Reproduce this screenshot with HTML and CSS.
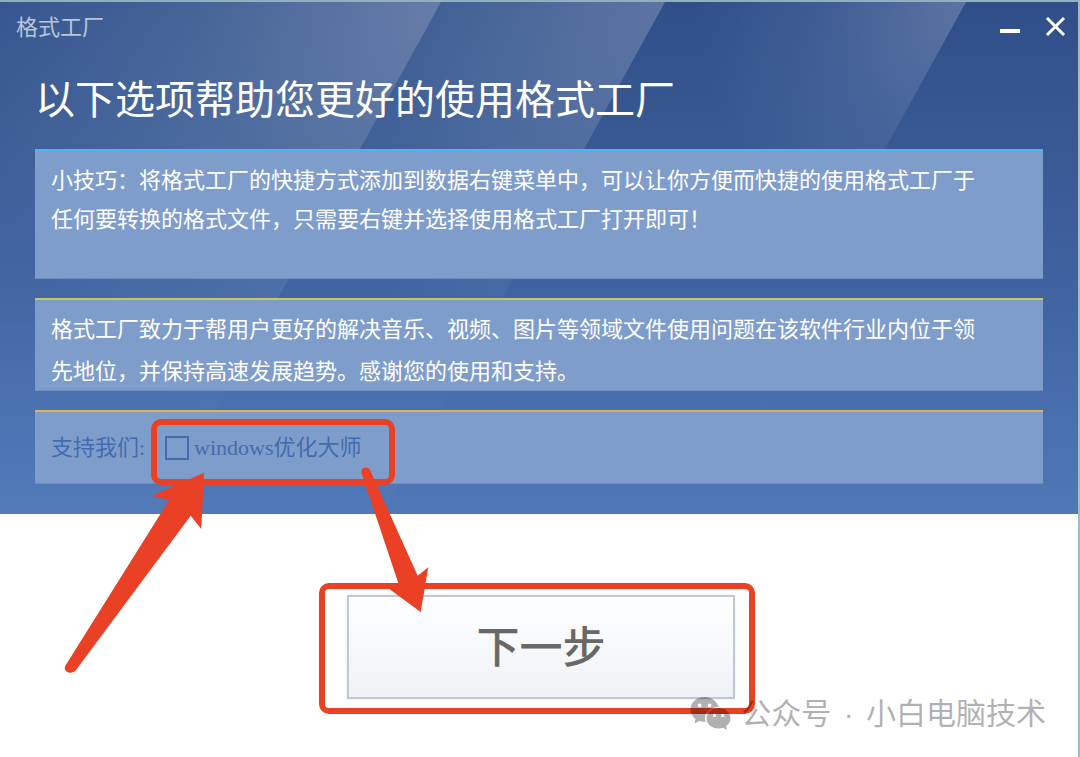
FILE: index.html
```html
<!DOCTYPE html>
<html lang="zh-CN">
<head>
    <meta charset="UTF-8">
    <meta name="viewport" content="width=device-width, initial-scale=1.0">
    <title>格式工厂</title>
    <link rel="stylesheet" href="styles.css">
</head>
<body>
    <div class="window">
        <div class="hero">
            <svg class="hero-bg" viewBox="0 0 1078 513" preserveAspectRatio="none" aria-hidden="true">
                <defs>
                    <radialGradient id="beam1" gradientUnits="userSpaceOnUse" cx="441" cy="0" r="480">
                        <stop offset="0" stop-color="#e4e4ec" stop-opacity="0.31"/>
                        <stop offset="0.5" stop-color="#c8dce4" stop-opacity="0.15"/>
                        <stop offset="1" stop-color="#a0c4e4" stop-opacity="0.04"/>
                    </radialGradient>
                    <radialGradient id="beam2" gradientUnits="userSpaceOnUse" cx="665" cy="0" r="400">
                        <stop offset="0" stop-color="#e4e4ec" stop-opacity="0.25"/>
                        <stop offset="0.5" stop-color="#c8dce4" stop-opacity="0.14"/>
                        <stop offset="1" stop-color="#a0c4e4" stop-opacity="0.02"/>
                    </radialGradient>
                    <radialGradient id="beam3" gradientUnits="userSpaceOnUse" cx="966" cy="0" r="270">
                        <stop offset="0" stop-color="#e4e4ec" stop-opacity="0.25"/>
                        <stop offset="0.5" stop-color="#d8dcf4" stop-opacity="0.1"/>
                        <stop offset="1" stop-color="#c0d0e0" stop-opacity="0"/>
                    </radialGradient>
                </defs>
                <polygon points="0,0 441,0 159,513 0,513" fill="url(#beam1)"/>
                <polygon points="441,0 665,0 383,513 159,513" fill="url(#beam2)"/>
                <polygon points="665,0 966,0 684,513 383,513" fill="url(#beam3)"/>
            </svg>

            <header class="titlebar">
                <span class="app-name">格式工厂</span>
                <div class="window-buttons">
                    <button type="button" class="window-button" aria-label="最小化">
                        <svg width="22" height="22" viewBox="0 0 22 22"><rect x="2" y="14" width="20" height="4" fill="#fff"/></svg>
                    </button>
                    <button type="button" class="window-button" aria-label="关闭">
                        <svg width="22" height="22" viewBox="0 0 22 22" fill="none" stroke="#fff" stroke-width="3"><path d="M3 3l17 17M20 3L3 20"/></svg>
                    </button>
                </div>
            </header>

            <h1>以下选项帮助您更好的使用格式工厂</h1>

            <div class="panels">
                <section class="panel tip">
                    <p>小技巧：将格式工厂的快捷方式添加到数据右键菜单中，可以让你方便而快捷的使用格式工厂于任何要转换的格式文件，只需要右键并选择使用格式工厂打开即可！</p>
                </section>
                <section class="panel about">
                    <p>格式工厂致力于帮用户更好的解决音乐、视频、图片等领域文件使用问题在该软件行业内位于领先地位，并保持高速发展趋势。感谢您的使用和支持。</p>
                </section>
                <section class="panel support">
                    <span class="support-title">支持我们:</span>
                    <input type="checkbox" id="optimizer">
                    <label for="optimizer">windows优化大师</label>
                </section>
            </div>
        </div>

        <div class="actions">
            <button type="button" class="next-button">下一步</button>
        </div>
    </div>

    <!-- Step markers -->
    <svg class="markers" width="1080" height="757" viewBox="0 0 1080 757" aria-hidden="true">
        <g fill="none" stroke="#ea4025" stroke-width="6">
            <rect x="154" y="422" width="238" height="60" rx="7"/>
            <rect x="322" y="586" width="430" height="125" rx="7"/>
        </g>
        <g fill="#ea4025">
            <path d="M204 472.700L152 495.700L169 500.300L65.500 665.500C62 671 71 676 76 670L190.700 515.700L201.300 529Z"/>
            <path d="M361.500 473C360 467 368 466 370 470L417.700 575.700L428.300 567.300L420.700 612L389.300 589L398.300 583Z"/>
        </g>
    </svg>

    <div class="watermark">
        <svg width="42" height="36" viewBox="0 0 42 36" aria-hidden="true">
            <path fill-rule="evenodd" d="M14.500 1C6.500 1 0.500 6.500 0.500 13.500C0.500 17.500 2.500 20.800 5.500 23L4.500 27.500L9.500 25Q12 26 15.500 26C13 17 20 11 28.500 11C27 5 21 1 14.500 1ZM9.700 7.500a1.900 1.900 0 1 1 0 3.800a1.900 1.900 0 1 1 0-3.800M19.500 7.500a1.900 1.900 0 1 1 0 3.800a1.900 1.900 0 1 1 0-3.800"/>
            <path fill-rule="evenodd" d="M28.500 12C21.500 12 16.500 16.500 16.500 22.300C16.500 28 21.500 32.500 28.500 32.500Q31 32.500 33 31.800L37 34L36 30.300Q40.500 27 40.500 22.300C40.500 16.500 35.500 12 28.500 12ZM24.500 17.800a1.600 1.600 0 1 1 0 3.200a1.600 1.600 0 1 1 0-3.200M32.700 17.800a1.600 1.600 0 1 1 0 3.200a1.600 1.600 0 1 1 0-3.200"/>
        </svg>
        <div>公众号<span class="dot"> · </span>小白电脑技术</div>
    </div>
</body>
</html>
```
FILE: styles.css
```css
* {
    box-sizing: border-box;
}

body {
    margin: 0;
    position: relative;
    background-color: #fff;
    font-family: "Noto Sans CJK SC", sans-serif;
    font-size: 22px;
    color: #fff;
}

h1,
p {
    margin: 0;
    font-weight: 400;
}

button {
    font-family: inherit;
    cursor: pointer;
}

.window {
    display: flex;
    flex-direction: column;
    min-height: 100vh;
    border-top: 2px solid #8fb0bc;
    border-right: 2px solid #9dbdc9;
}

.hero {
    position: relative;
    isolation: isolate;
    padding-bottom: 30px;
    background: linear-gradient(#304f8a 0%, #385892 25%, #4062a0 56%, #476dac 76%, #4f78b7 100%);
}

.hero-bg {
    position: absolute;
    inset: 0;
    z-index: -1;
    width: 100%;
    height: 100%;
}

/* Title bar */
.titlebar {
    display: flex;
    align-items: center;
    justify-content: space-between;
    height: 48px;
    padding: 0 12px 0 16px;
}

.app-name {
    padding-bottom: 2px;
    color: #b9c5d9;
}

.window-buttons {
    display: flex;
    gap: 24px;
}

.window-button {
    display: flex;
    padding: 0;
    border: none;
    background: none;
}

h1 {
    padding: 14px 35px 18px;
    font-size: 40px;
    line-height: 67px;
}

/* Panels */
.panels {
    display: flex;
    flex-direction: column;
    gap: 19px;
    padding: 0 35px;
}

.panel {
    padding: 0 16px;
    border-top: 2px solid;
    background-color: #7f9dcb;
    box-shadow: inset 0 -1px #6d8cbf;
}

.panel p {
    max-width: 940px;
}

.tip {
    padding-top: 8px;
    padding-bottom: 42px;
    border-color: #4bb5f6;
    line-height: 39px;
}

.about {
    padding-top: 6px;
    padding-bottom: 1px;
    border-color: #c6c858;
    line-height: 42px;
}

.support {
    display: flex;
    align-items: center;
    padding-top: 16px;
    padding-bottom: 16px;
    border-color: #e0b056;
    color: #436cae;
    font-family: "Liberation Serif", "Noto Sans CJK SC", serif;
    line-height: 40px;
}

.support-title {
    width: 114px;
}

.support input {
    appearance: none;
    width: 24px;
    height: 24px;
    margin: 0 5px 0 0;
    border: 2px solid #436cae;
}

.support input:checked {
    background-color: #436cae;
}

/* Footer */
.actions {
    display: flex;
    justify-content: center;
    padding: 81px 0 56px 4px;
}

.next-button {
    width: 388px;
    height: 104px;
    padding-bottom: 8px;
    border: 2px solid #bfc8d3;
    background: linear-gradient(#fdfeff, #f8f9fb 45%, #eef1f5);
    box-shadow: 0 0 3px #dfe5ec;
    color: #686868;
    font-size: 43px;
    font-weight: 500;
}

.markers {
    position: absolute;
    top: 0;
    left: 0;
    pointer-events: none;
}

.watermark {
    position: absolute;
    right: 34px;
    bottom: 21px;
    display: flex;
    align-items: center;
    gap: 9px;
    color: #000;
    font-family: "Liberation Sans", "Noto Sans CJK SC", sans-serif;
    font-size: 30px;
    line-height: 44px;
    opacity: 0.3;
    pointer-events: none;
}

.dot {
    padding: 0 4px;
}
```
